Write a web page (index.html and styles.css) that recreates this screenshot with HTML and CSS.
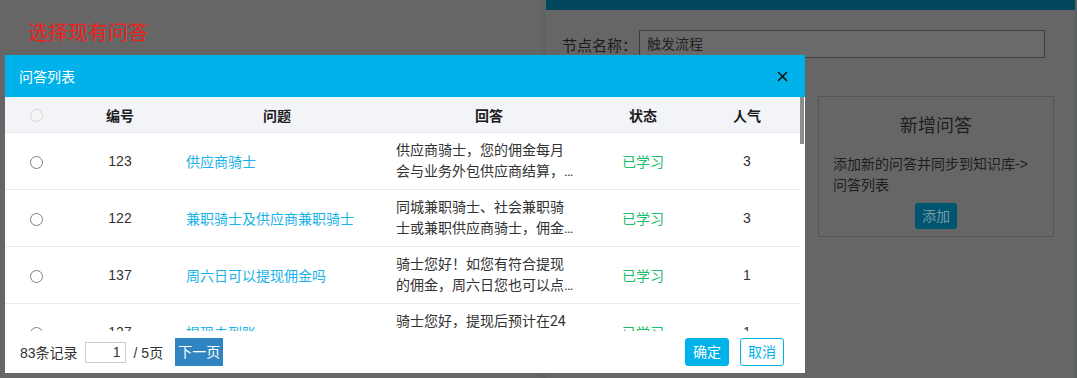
FILE: index.html
```html
<!DOCTYPE html>
<html lang="zh-CN">

<head>
    <meta charset="UTF-8">
    <meta name="viewport" content="width=device-width, initial-scale=1.0">
    <title>选择现有问答</title>
    <link rel="stylesheet" href="styles.css">
</head>

<body>
    <div class="page">
        <div class="left">
            <h1 class="page-title">选择现有问答</h1>
        </div>
        <div class="panel">
            <div class="panel-bar"></div>
            <div class="field">
                <label class="field-label">节点名称：</label>
                <div class="field-input">触发流程</div>
            </div>
            <div class="card">
                <div class="card-title">新增问答</div>
                <div class="card-text">添加新的问答并同步到知识库->问答列表</div>
                <div class="card-btn">添加</div>
            </div>
        </div>
    </div>

    <div class="modal">
        <div class="modal-header">
            <span class="modal-title">问答列表</span>
            <svg class="modal-close" width="11" height="11" viewBox="0 0 11 11">
                <path d="M1 1L10 10M10 1L1 10" stroke="#111" stroke-width="1.6" fill="none" />
            </svg>
        </div>
        <div class="modal-body">
            <div class="table-wrap">
                <table class="qa-table">
                    <colgroup>
                        <col class="c-sel">
                        <col class="c-id">
                        <col class="c-q">
                        <col class="c-a">
                        <col class="c-st">
                        <col class="c-pop">
                    </colgroup>
                    <thead>
                        <tr>
                            <th><input type="radio" class="radio" disabled></th>
                            <th>编号</th>
                            <th>问题</th>
                            <th>回答</th>
                            <th>状态</th>
                            <th class="pop">人气</th>
                        </tr>
                    </thead>
                    <tbody>
                        <tr>
                            <td><input type="radio" name="qa" class="radio"></td>
                            <td>123</td>
                            <td class="q"><a href="#">供应商骑士</a></td>
                            <td class="a"><div class="answer">供应商骑士，您的佣金每月会与业务外包供应商结算，由供应商发放给您。</div></td>
                            <td class="st">已学习</td>
                            <td class="pop">3</td>
                        </tr>
                        <tr>
                            <td><input type="radio" name="qa" class="radio"></td>
                            <td>122</td>
                            <td class="q"><a href="#">兼职骑士及供应商兼职骑士</a></td>
                            <td class="a"><div class="answer">同城兼职骑士、社会兼职骑士或兼职供应商骑士，佣金按周结算。</div></td>
                            <td class="st">已学习</td>
                            <td class="pop">3</td>
                        </tr>
                        <tr>
                            <td><input type="radio" name="qa" class="radio"></td>
                            <td>137</td>
                            <td class="q"><a href="#">周六日可以提现佣金吗</a></td>
                            <td class="a"><div class="answer">骑士您好！如您有符合提现的佣金，周六日您也可以点击提现申请。</div></td>
                            <td class="st">已学习</td>
                            <td class="pop">1</td>
                        </tr>
                        <tr>
                            <td><input type="radio" name="qa" class="radio"></td>
                            <td>127</td>
                            <td class="q"><a href="#">提现未到账</a></td>
                            <td class="a"><div class="answer">骑士您好，提现后预计在24小时内到账，如未到账请联系客服。</div></td>
                            <td class="st">已学习</td>
                            <td class="pop">1</td>
                        </tr>
                        <tr>
                            <td><input type="radio" name="qa" class="radio"></td>
                            <td>115</td>
                            <td class="q"><a href="#">提现失败怎么办</a></td>
                            <td class="a"><div class="answer">骑士您好，提现失败可能是银行卡信息有误，请核对后重新提交。</div></td>
                            <td class="st">已学习</td>
                            <td class="pop">1</td>
                        </tr>
                        <tr>
                            <td><input type="radio" name="qa" class="radio"></td>
                            <td>108</td>
                            <td class="q"><a href="#">如何绑定银行卡</a></td>
                            <td class="a"><div class="answer">骑士您好，您可以在“我的-钱包-银行卡”中添加并绑定银行卡。</div></td>
                            <td class="st">已学习</td>
                            <td class="pop">2</td>
                        </tr>
                        <tr>
                            <td><input type="radio" name="qa" class="radio"></td>
                            <td>101</td>
                            <td class="q"><a href="#">佣金什么时候发放</a></td>
                            <td class="a"><div class="answer">骑士您好，佣金按结算周期发放，具体以APP内结算明细为准。</div></td>
                            <td class="st">已学习</td>
                            <td class="pop">2</td>
                        </tr>
                        <tr>
                            <td><input type="radio" name="qa" class="radio"></td>
                            <td>98</td>
                            <td class="q"><a href="#">如何修改手机号</a></td>
                            <td class="a"><div class="answer">骑士您好，您可以在“设置-账号与安全”中修改绑定的手机号。</div></td>
                            <td class="st">已学习</td>
                            <td class="pop">1</td>
                        </tr>
                        <tr>
                            <td><input type="radio" name="qa" class="radio"></td>
                            <td>95</td>
                            <td class="q"><a href="#">订单超时如何处理</a></td>
                            <td class="a"><div class="answer">骑士您好，订单超时可在订单详情中提交申诉，客服会尽快处理。</div></td>
                            <td class="st">已学习</td>
                            <td class="pop">1</td>
                        </tr>
                        <tr>
                            <td><input type="radio" name="qa" class="radio"></td>
                            <td>92</td>
                            <td class="q"><a href="#">怎样申请休息</a></td>
                            <td class="a"><div class="answer">骑士您好，您可以提前在排班页面提交休息申请，由站长审核。</div></td>
                            <td class="st">已学习</td>
                            <td class="pop">0</td>
                        </tr>
                        <tr>
                            <td><input type="radio" name="qa" class="radio"></td>
                            <td>90</td>
                            <td class="q"><a href="#">如何查看收入明细</a></td>
                            <td class="a"><div class="answer">骑士您好，在“我的-钱包-收入明细”中可以查看每日收入。</div></td>
                            <td class="st">已学习</td>
                            <td class="pop">2</td>
                        </tr>
                        <tr>
                            <td><input type="radio" name="qa" class="radio"></td>
                            <td>87</td>
                            <td class="q"><a href="#">健康证如何上传</a></td>
                            <td class="a"><div class="answer">骑士您好，请在“我的-资质证件”中拍照上传健康证。</div></td>
                            <td class="st">已学习</td>
                            <td class="pop">1</td>
                        </tr>
                        <tr>
                            <td><input type="radio" name="qa" class="radio"></td>
                            <td>85</td>
                            <td class="q"><a href="#">装备押金如何退还</a></td>
                            <td class="a"><div class="answer">骑士您好，离职归还装备后，押金将在审核通过后退还。</div></td>
                            <td class="st">已学习</td>
                            <td class="pop">1</td>
                        </tr>
                        <tr>
                            <td><input type="radio" name="qa" class="radio"></td>
                            <td>81</td>
                            <td class="q"><a href="#">如何更换站点</a></td>
                            <td class="a"><div class="answer">骑士您好，更换站点请联系所在站点站长提交调站申请。</div></td>
                            <td class="st">已学习</td>
                            <td class="pop">0</td>
                        </tr>
                        <tr>
                            <td><input type="radio" name="qa" class="radio"></td>
                            <td>78</td>
                            <td class="q"><a href="#">投诉申诉流程</a></td>
                            <td class="a"><div class="answer">骑士您好，收到投诉后您可在三日内提交申诉并上传相关凭证。</div></td>
                            <td class="st">已学习</td>
                            <td class="pop">1</td>
                        </tr>
                        <tr>
                            <td><input type="radio" name="qa" class="radio"></td>
                            <td>76</td>
                            <td class="q"><a href="#">保险如何理赔</a></td>
                            <td class="a"><div class="answer">骑士您好，发生意外请第一时间报案，并按提示提交理赔材料。</div></td>
                            <td class="st">已学习</td>
                            <td class="pop">1</td>
                        </tr>
                        <tr>
                            <td><input type="radio" name="qa" class="radio"></td>
                            <td>73</td>
                            <td class="q"><a href="#">夜间补贴规则</a></td>
                            <td class="a"><div class="answer">骑士您好，夜间时段完成的订单可获得额外补贴，以活动页为准。</div></td>
                            <td class="st">已学习</td>
                            <td class="pop">0</td>
                        </tr>
                        <tr>
                            <td><input type="radio" name="qa" class="radio"></td>
                            <td>70</td>
                            <td class="q"><a href="#">恶劣天气补贴</a></td>
                            <td class="a"><div class="answer">骑士您好，雨雪等恶劣天气期间将按订单发放天气补贴。</div></td>
                            <td class="st">已学习</td>
                            <td class="pop">0</td>
                        </tr>
                        <tr>
                            <td><input type="radio" name="qa" class="radio"></td>
                            <td>66</td>
                            <td class="q"><a href="#">账号被冻结怎么办</a></td>
                            <td class="a"><div class="answer">骑士您好，账号冻结请联系客服核实原因，按要求处理后解冻。</div></td>
                            <td class="st">已学习</td>
                            <td class="pop">0</td>
                        </tr>
                        <tr>
                            <td><input type="radio" name="qa" class="radio"></td>
                            <td>63</td>
                            <td class="q"><a href="#">如何注销账号</a></td>
                            <td class="a"><div class="answer">骑士您好，结清佣金并归还装备后，可在设置中申请注销账号。</div></td>
                            <td class="st">已学习</td>
                            <td class="pop">0</td>
                        </tr>
                    </tbody>
                </table>
            </div>
            <div class="scrollbar">
                <div class="scroll-thumb"></div>
            </div>
        </div>
        <div class="modal-footer">
            <div class="pager">
                <span>83条记录</span>
                <input type="text" class="page-input" value="1">
                <span>/ 5页</span>
                <span class="btn-next">下一页</span>
            </div>
            <div class="actions">
                <span class="btn btn-ok">确定</span>
                <span class="btn btn-cancel">取消</span>
            </div>
        </div>
    </div>
</body>

</html>
```

FILE: styles.css
```css
body {
    margin: 0;
    padding: 0;
    height: 378px;
    overflow: hidden;
    background-color: #666;
    font-family: "Liberation Sans", "Noto Sans CJK SC", sans-serif;
    font-size: 14px;
}

.page {
    display: flex;
    height: 378px;
}

.left {
    width: 540px;
}

.page-title {
    margin: 20px 0 0 28px;
    font-size: 20px;
    font-weight: normal;
    color: #f0201c;
    line-height: 26px;
}

.panel {
    flex: 1;
    border-left: 6px solid #5e6462;
    border-right: 2px solid #5a605f;
}

.panel-bar {
    height: 10px;
    background-color: #00475d;
}

.field {
    display: flex;
    align-items: center;
    margin-top: 20px;
    padding-left: 16px;
}

.field-label {
    width: 77px;
    font-size: 15px;
    color: #1a1a1a;
}

.field-input {
    width: 406px;
    height: 28px;
    box-sizing: border-box;
    border: 1px solid #3c3c3c;
    background-color: #6a6a6a;
    padding-left: 7px;
    line-height: 26px;
    color: #222;
}

.card {
    width: 236px;
    height: 141px;
    box-sizing: border-box;
    margin: 38px 0 0 272px;
    border: 1px solid #555;
    padding: 16px 14px 0;
    text-align: center;
    color: #1e1e1e;
}

.card-title {
    font-size: 18px;
    line-height: 26px;
}

.card-text {
    margin-top: 15px;
    text-align: left;
    line-height: 21px;
}

.card-btn {
    display: inline-block;
    margin-top: 7px;
    padding: 0 7px;
    height: 26px;
    line-height: 26px;
    border-radius: 3px;
    background-color: #005570;
    color: #7d9aa4;
}

/* modal */
.modal {
    position: absolute;
    left: 5px;
    top: 55px;
    width: 800px;
    height: 318px;
    background-color: #fff;
    display: flex;
    flex-direction: column;
}

.modal-header {
    height: 42px;
    flex-shrink: 0;
    display: flex;
    align-items: center;
    justify-content: space-between;
    padding: 0 17px 0 14px;
    background-color: #00b2ea;
}

.modal-title {
    color: #fff;
    font-size: 14px;
}

.modal-close {
    cursor: pointer;
}

.modal-body {
    display: flex;
    height: 234px;
}

.table-wrap {
    flex: 1;
    overflow: hidden;
}

.scrollbar {
    width: 5px;
    background-color: #fff;
}

.scroll-thumb {
    width: 4px;
    height: 47px;
    background-color: #8c8c8c;
}

.qa-table {
    width: 100%;
    table-layout: fixed;
    border-collapse: collapse;
    color: #333;
}

.c-sel { width: 62px; }
.c-id { width: 106px; }
.c-q { width: 208px; }
.c-a { width: 216px; }
.c-st { width: 92px; }

.qa-table th {
    height: 35px;
    padding: 0;
    background-color: #f3f4f8;
    border-bottom: 1px solid #e8eaec;
    font-weight: bold;
    color: #1c1c1c;
    text-align: center;
}

.qa-table td {
    height: 56px;
    padding: 0;
    border-bottom: 1px solid #e8eaec;
    text-align: center;
    vertical-align: middle;
}

.qa-table .pop {
    padding-left: 5px;
}

.qa-table td.q {
    text-align: left;
    padding-left: 13px;
}

.qa-table td.q a {
    color: #19b2e8;
    text-decoration: none;
}

.qa-table td.a {
    text-align: left;
    padding-left: 15px;
}

.answer {
    width: 181px;
    line-height: 21px;
    font-family: Roboto, "Noto Sans CJK SC", sans-serif;
    display: -webkit-box;
    -webkit-line-clamp: 2;
    -webkit-box-orient: vertical;
    overflow: hidden;
}

.qa-table td.st {
    color: #19be6b;
}

.radio {
    -webkit-appearance: none;
    appearance: none;
    width: 13px;
    height: 13px;
    margin: 0;
    border: 1px solid #7f7f7f;
    border-radius: 50%;
    background-color: #fff;
    vertical-align: middle;
}

.radio:disabled {
    border-color: #d4d4d4;
    background-color: #f6f6f6;
}

.modal-footer {
    height: 42px;
    flex-shrink: 0;
    display: flex;
    align-items: center;
    justify-content: space-between;
    padding: 0 21px 0 15px;
}

.pager {
    display: flex;
    align-items: center;
    color: #333;
}

.page-input {
    width: 41px;
    height: 21px;
    box-sizing: border-box;
    margin: 0 8px 0 7px;
    border: 1px solid #ccc;
    padding: 0 4px;
    text-align: right;
    font-family: inherit;
    font-size: 14px;
    color: #333;
}

.btn-next {
    margin-left: 12px;
    width: 48px;
    height: 28px;
    line-height: 28px;
    text-align: center;
    background-color: #3085c0;
    color: #fff;
}

.actions {
    display: flex;
    gap: 11px;
}

.btn {
    width: 44px;
    height: 28px;
    box-sizing: border-box;
    line-height: 26px;
    text-align: center;
    border-radius: 3px;
    border: 1px solid #00b2ea;
    cursor: pointer;
}

.btn-ok {
    background-color: #00b2ea;
    color: #fff;
}

.btn-cancel {
    background-color: #fff;
    color: #00b2ea;
}
```
